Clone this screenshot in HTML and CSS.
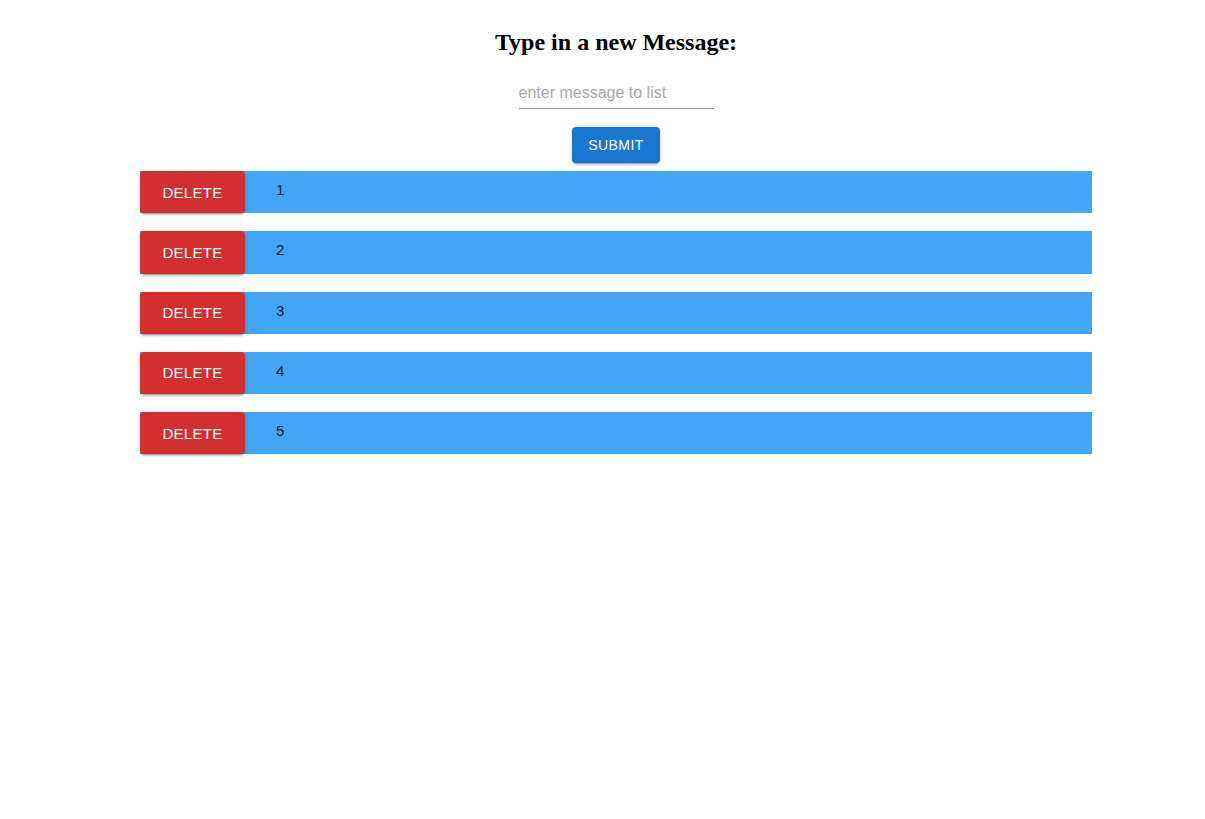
FILE: index.html
```html
<!DOCTYPE html>
<html>
<head>
<meta charset="utf-8">
<link rel="stylesheet" href="styles.css">
</head>
<body>
<div class="app">
  <h2 class="title">Type in a new Message:</h2>
  <form class="form">
    <div class="field">
      <input class="input" type="text" placeholder="enter message to list">
    </div>
    <button class="submit" type="button">Submit</button>
  </form>
  <ul class="list">
    <li class="row"><button class="delete" type="button">Delete</button><span class="msg">1</span></li>
    <li class="row"><button class="delete" type="button">Delete</button><span class="msg">2</span></li>
    <li class="row"><button class="delete" type="button">Delete</button><span class="msg">3</span></li>
    <li class="row"><button class="delete" type="button">Delete</button><span class="msg">4</span></li>
    <li class="row"><button class="delete" type="button">Delete</button><span class="msg">5</span></li>
  </ul>
</div>
</body>
</html>
```

FILE: styles.css
```css
html, body {
  margin: 0;
  padding: 0;
  background: #fff;
}
body {
  padding: 8px;
}
.app {
  width: 952px;
  margin-left: 132px;
  display: flex;
  flex-direction: column;
  align-items: center;
}
.title {
  font-family: "Liberation Serif", "Times New Roman", serif;
  font-weight: bold;
  font-size: 24px;
  line-height: 28px;
  margin: 20px 0 20px;
  color: #000;
}
.form {
  display: flex;
  flex-direction: column;
  align-items: center;
  margin: 0;
}
.field {
  width: 195px;
  border-bottom: 1px solid rgba(0,0,0,0.42);
}
.input {
  display: block;
  width: 100%;
  box-sizing: border-box;
  border: none;
  outline: none;
  padding: 7px 0 6px;
  height: 32px;
  font-family: "Liberation Sans", Arial, sans-serif;
  font-size: 16px;
  color: rgba(0,0,0,0.87);
  background: transparent;
}
.input::placeholder {
  color: #a9a9a9;
  opacity: 1;
}
.submit {
  margin-top: 18px;
  height: 36px;
  width: 88px;
  padding: 0;
  border: none;
  border-radius: 4px;
  background: #1976d2;
  color: #fff;
  font-family: "Liberation Sans", Arial, sans-serif;
  font-size: 14px;
  letter-spacing: 0.4px;
  text-transform: uppercase;
  box-shadow: 0 3px 1px -2px rgba(0,0,0,0.2), 0 2px 2px 0 rgba(0,0,0,0.14), 0 1px 5px 0 rgba(0,0,0,0.12);
}
.list {
  list-style: none;
  margin: 8px 0 0;
  padding: 0;
  width: 952px;
  display: flex;
  flex-direction: column;
  gap: 18px;
}
.row {
  display: flex;
  align-items: flex-start;
  height: 42.25px;
  background: #42a5f5;
}
.delete {
  width: 105px;
  height: 42.25px;
  padding: 0;
  border: none;
  border-radius: 4px;
  background: #d32f2f;
  color: #fff;
  font-family: "Liberation Sans", Arial, sans-serif;
  font-size: 15px;
  letter-spacing: 0.3px;
  text-transform: uppercase;
  box-shadow: 0 3px 1px -2px rgba(0,0,0,0.2), 0 2px 2px 0 rgba(0,0,0,0.14), 0 1px 5px 0 rgba(0,0,0,0.12);
  flex: none;
}
.msg {
  margin-left: 31px;
  padding-top: 7px;
  font-family: "Liberation Sans", Arial, sans-serif;
  font-size: 15px;
  line-height: 24px;
  color: rgba(0,0,0,0.87);
}
```
